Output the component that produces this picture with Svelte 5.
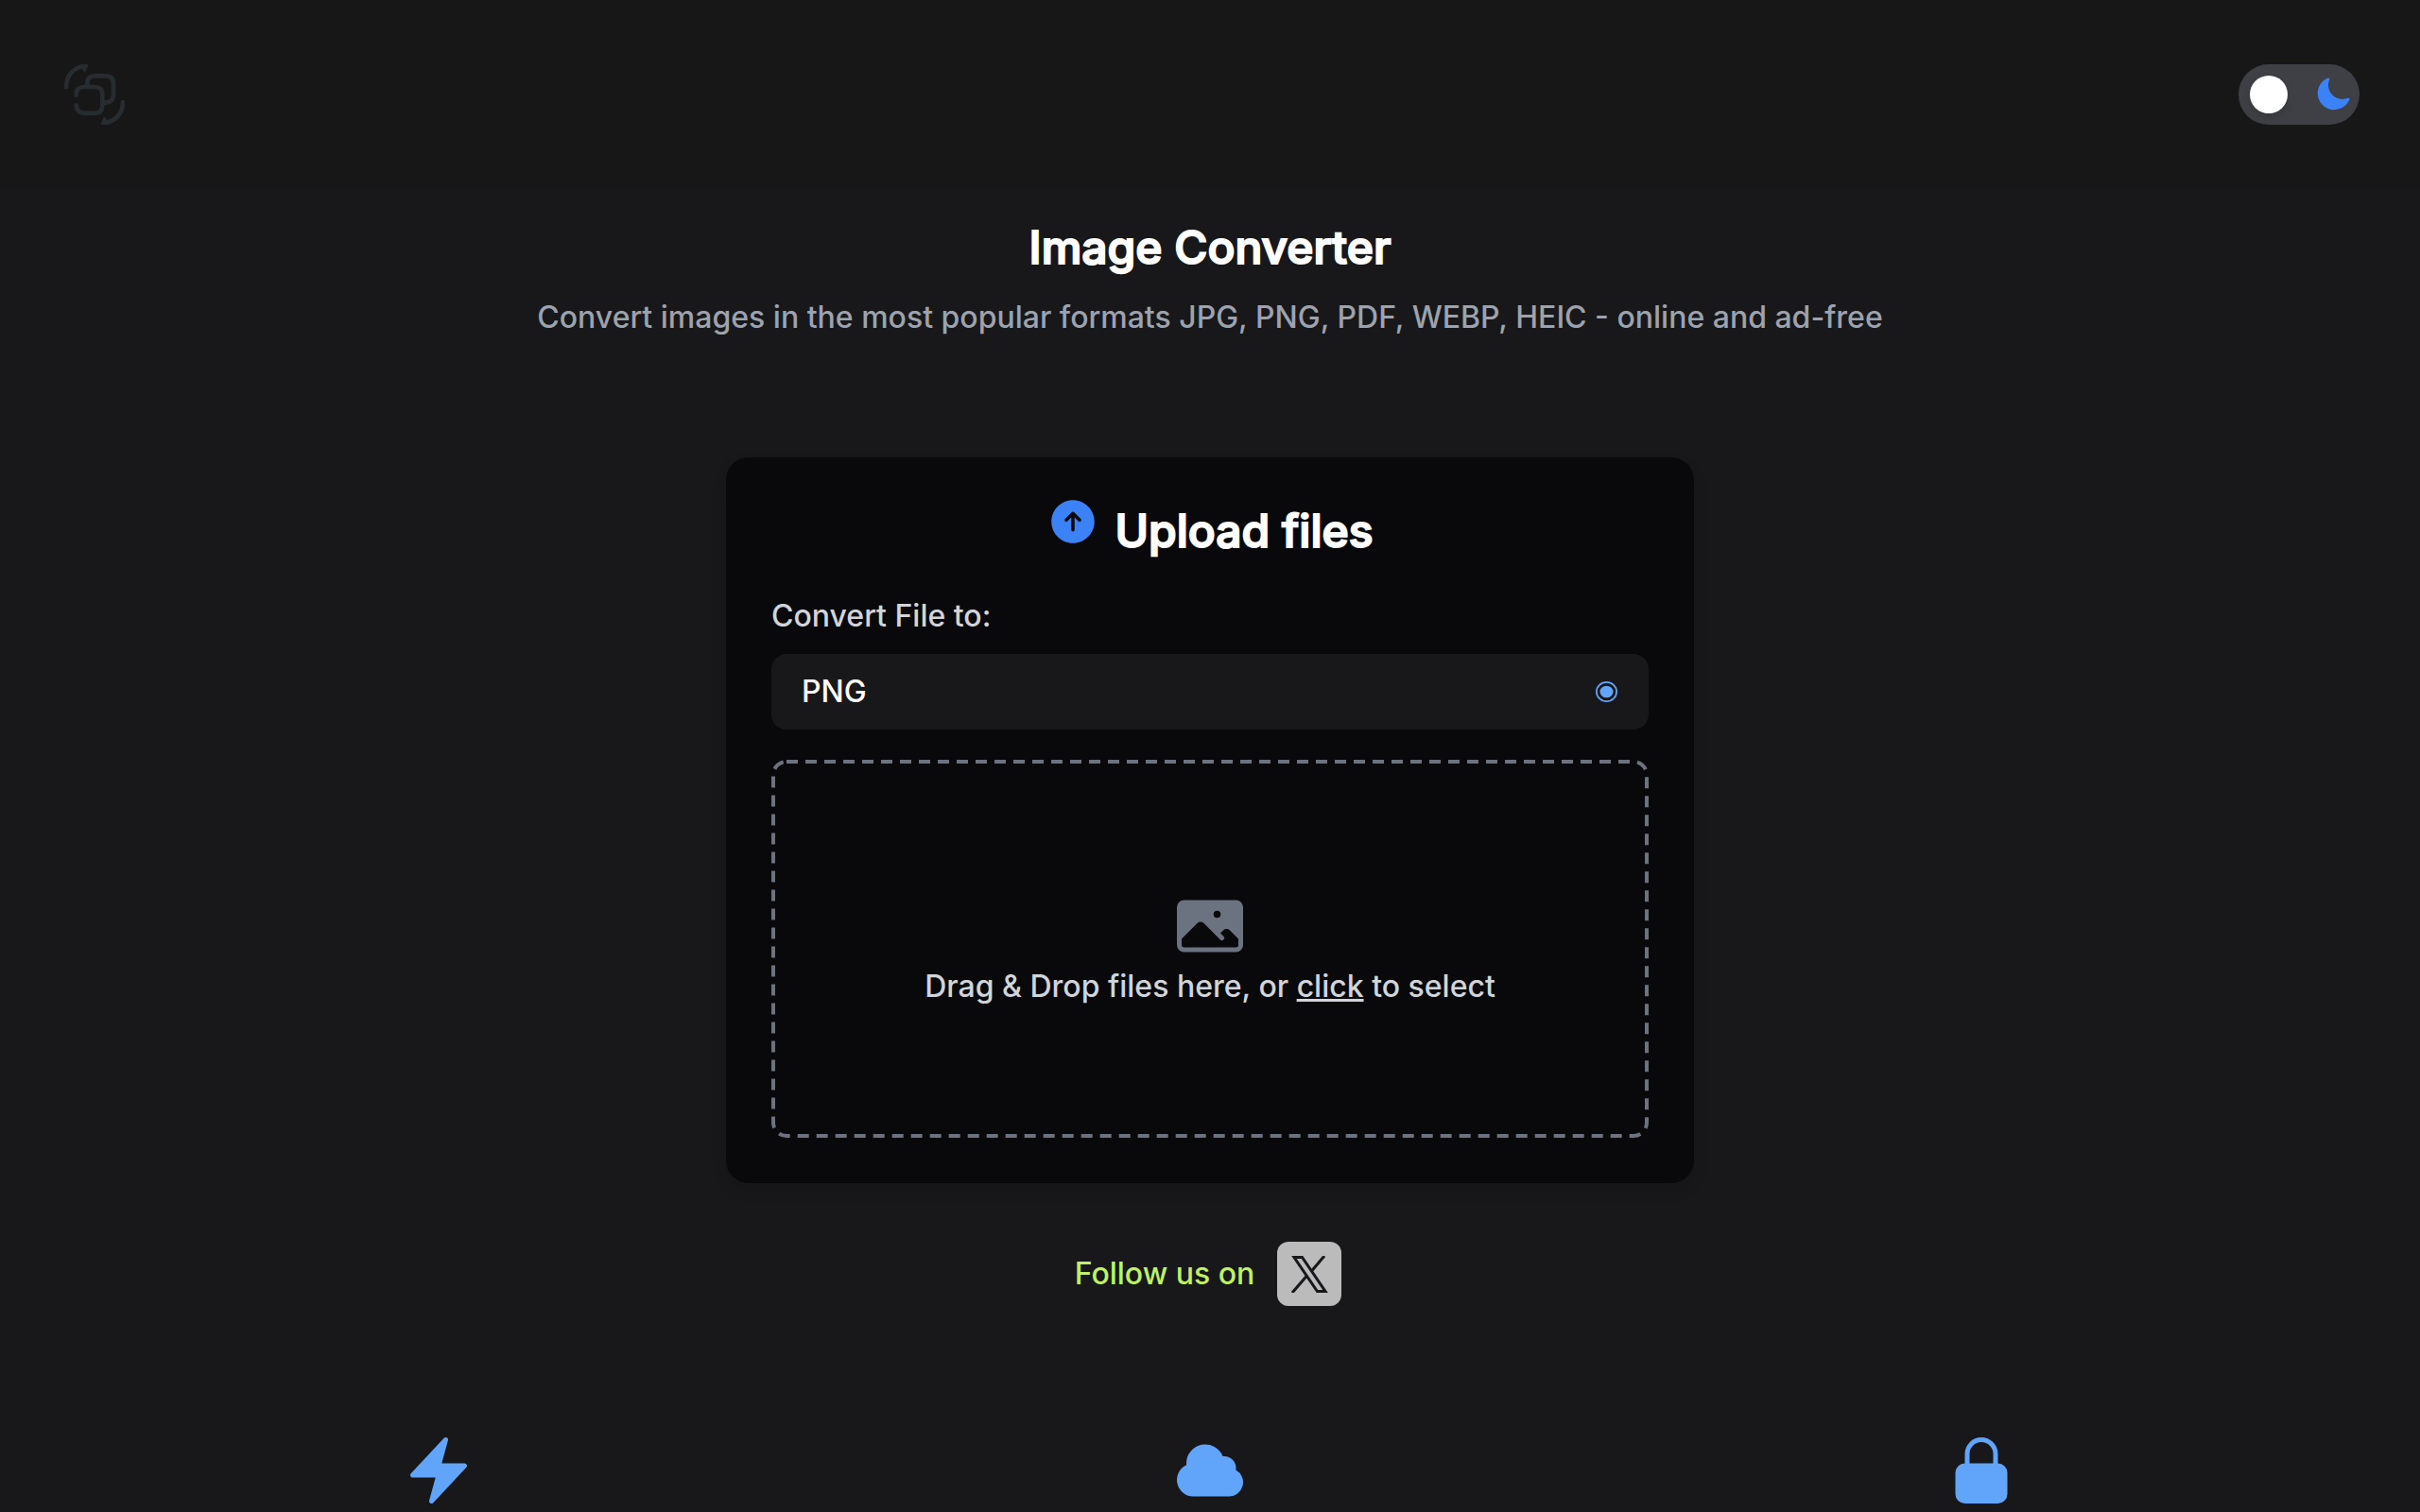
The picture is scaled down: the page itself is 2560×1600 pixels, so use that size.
<script lang="ts">
  let format: string = "PNG";
  let dark: boolean = true;
  const formats = ["PNG", "JPG", "PDF", "WEBP", "HEIC"];
</script>

<header class="header">
  <a class="logo" href="/" aria-label="Home">
    <svg viewBox="0 0 192 192" fill="none" aria-hidden="true">
      <path d="M6 72C7 34 30 9 68 6" />
      <path class="tip" d="M50 4L72 4L65 21Z" />
      <path d="M73 64V60Q73 37 97 37H132Q156 37 156 61V96Q156 120 132 122H126" />
      <path d="M38 98V96Q38 72 62 72H97Q121 72 121 96V131Q121 155 97 155H62Q40 154 38 130" />
      <path d="M186 120C185 158 162 183 124 186" />
      <path class="tip" d="M142 188L120 188L127 171Z" />
    </svg>
  </a>
  <label class="switch">
    <input type="checkbox" aria-label="Dark mode" bind:checked={dark} />
    <span class="knob"></span>
    <svg viewBox="0 0 24 24" fill="currentColor" aria-hidden="true">
      <path d="M9.528 1.718a.75.75 0 0 1 .162.819A8.97 8.97 0 0 0 9 6a9 9 0 0 0 9 9 8.97 8.97 0 0 0 3.463-.69.75.75 0 0 1 .981.98 10.503 10.503 0 0 1-9.694 6.46c-5.799 0-10.5-4.7-10.5-10.5 0-4.368 2.667-8.112 6.46-9.694a.75.75 0 0 1 .818.162Z" />
    </svg>
  </label>
</header>

<main>
  <h1>Image Converter</h1>
  <p class="subtitle">
    Convert images in the most popular formats JPG, PNG, PDF, WEBP, HEIC - online and ad-free
  </p>

  <section class="card">
    <div class="card__title">
      <svg viewBox="0 0 24 24" fill="currentColor" aria-hidden="true">
        <path fill-rule="evenodd" d="M12 2.25c-5.385 0-9.75 4.365-9.75 9.75s4.365 9.75 9.75 9.75 9.75-4.365 9.75-9.75S17.385 2.25 12 2.25Zm.53 5.47a.75.75 0 0 0-1.06 0l-3 3a.75.75 0 1 0 1.06 1.06l1.72-1.72v5.69a.75.75 0 0 0 1.5 0v-5.69l1.72 1.72a.75.75 0 1 0 1.06-1.06l-3-3Z" clip-rule="evenodd" />
      </svg>
      <h2>Upload files</h2>
    </div>

    <label class="field-label" for="format">Convert File to:</label>
    <div class="select">
      <select id="format" bind:value={format}>
        {#each formats as item}
          <option value={item}>{item}</option>
        {/each}
      </select>
      <svg viewBox="0 0 24 24" aria-hidden="true">
        <ellipse cx="11.5" cy="12" rx="10.6" ry="10.2" fill="none" stroke="currentColor" stroke-width="1.8" />
        <ellipse cx="11.5" cy="12" rx="7" ry="6.3" fill="currentColor" />
      </svg>
    </div>

    <div class="dropzone">
      <svg class="dropzone__border" aria-hidden="true">
        <rect x="2" y="2" rx="14" />
      </svg>
      <svg class="dropzone__icon" viewBox="0 0 24 24" fill="currentColor" aria-hidden="true">
        <path fill-rule="evenodd" d="M1.5 6a2.25 2.25 0 0 1 2.25-2.25h16.5A2.25 2.25 0 0 1 22.5 6v12a2.25 2.25 0 0 1-2.25 2.25H3.75A2.25 2.25 0 0 1 1.5 18V6ZM3 16.06V18c0 .414.336.75.75.75h16.5A.75.75 0 0 0 21 18v-1.94l-2.69-2.689a1.5 1.5 0 0 0-2.12 0l-.88.879.97.97a.75.75 0 1 1-1.06 1.06l-5.16-5.159a1.5 1.5 0 0 0-2.12 0L3 16.061Zm10.125-7.81a1.125 1.125 0 1 1 2.25 0 1.125 1.125 0 0 1-2.25 0Z" clip-rule="evenodd" />
      </svg>
      <p>Drag &amp; Drop files here, or <button type="button">click</button> to select</p>
    </div>
  </section>

  <div class="follow">
    <span>Follow us on</span>
    <a href="https://x.com" aria-label="X">
      <svg viewBox="0 0 39 39" aria-hidden="true">
        <path fill="none" stroke="currentColor" stroke-width="3" d="M3 1.5H11.5L36 37.5H27.5Z" />
        <path fill="none" stroke="currentColor" stroke-width="3" d="M35 0L21.5 16M1 39L16.5 21" />
      </svg>
    </a>
  </div>

  <div class="features">
    <svg viewBox="0 0 24 24" fill="currentColor" aria-hidden="true">
      <path fill-rule="evenodd" d="M14.615 1.595a.75.75 0 0 1 .359.852L12.982 9.75h7.268a.75.75 0 0 1 .548 1.262l-10.5 11.25a.75.75 0 0 1-1.272-.71l1.992-7.302H3.75a.75.75 0 0 1-.548-1.262l10.5-11.25a.75.75 0 0 1 .913-.143Z" clip-rule="evenodd" />
    </svg>
    <svg viewBox="0 0 24 24" fill="currentColor" aria-hidden="true">
      <path fill-rule="evenodd" d="M4.5 9.75a6 6 0 0 1 11.573-2.226 3.75 3.75 0 0 1 4.133 4.303A4.5 4.5 0 0 1 18 20.25H6.75a5.25 5.25 0 0 1-2.23-10.004 6.072 6.072 0 0 1-.02-.496Z" clip-rule="evenodd" />
    </svg>
    <svg viewBox="0 0 24 24" fill="currentColor" aria-hidden="true">
      <path fill-rule="evenodd" d="M12 1.5a5.25 5.25 0 0 0-5.25 5.25v3a3 3 0 0 0-3 3v6.75a3 3 0 0 0 3 3h10.5a3 3 0 0 0 3-3v-6.75a3 3 0 0 0-3-3v-3c0-2.9-2.35-5.25-5.25-5.25Zm3.75 8.25v-3a3.75 3.75 0 1 0-7.5 0v3h7.5Z" clip-rule="evenodd" />
    </svg>
  </div>
</main>

<style>
  :global(body) {
    background-color: #18181b;
    color: #fff;
    font-family: Inter, "Liberation Sans", sans-serif;
    font-size: 32px;
    font-weight: 500;
    line-height: 48px;
  }

  h1,
  h2,
  p {
    margin: 0;
  }

  svg {
    display: block;
  }

  .header {
    display: flex;
    justify-content: space-between;
    align-items: center;
    padding: 68px 64px 68px 68px;
    background-color: #171717;
  }

  .logo svg {
    width: 64px;
    height: 64px;
    stroke: #272c30;
    stroke-width: 14;
    stroke-linecap: round;
    stroke-linejoin: round;
  }

  .logo .tip {
    fill: #272c30;
    stroke-width: 6;
  }

  .switch {
    display: flex;
    justify-content: space-between;
    align-items: center;
    box-sizing: border-box;
    width: 128px;
    height: 64px;
    padding: 0 8px 0 12px;
    border-radius: 32px;
    background-color: #3f3f46;
    cursor: pointer;
  }

  .switch input {
    position: absolute;
    opacity: 0;
  }

  .switch svg {
    width: 40px;
    height: 40px;
    color: #3b82f6;
  }

  .knob {
    width: 40px;
    height: 40px;
    border-radius: 50%;
    background-color: #fff;
    box-shadow: 0 4px 8px rgba(0, 0, 0, 0.15);
  }

  main {
    display: flex;
    flex-direction: column;
    align-items: center;
    padding-top: 28px;
  }

  h1,
  h2 {
    font-size: 48px;
    font-weight: 500;
    line-height: 68px;
    -webkit-text-stroke: 2px #fff;
  }

  .subtitle {
    margin-top: 16px;
    color: #9ca3af;
    text-align: center;
  }

  .card {
    box-sizing: border-box;
    width: 100%;
    max-width: 1024px;
    margin-top: 124px;
    padding: 40px 48px 48px;
    border-radius: 24px;
    background-color: #09090b;
    box-shadow: 0 8px 16px rgba(0, 0, 0, 0.1);
  }

  .card__title {
    display: flex;
    justify-content: center;
    gap: 16px;
  }

  .card__title svg {
    width: 56px;
    height: 56px;
    color: #3b82f6;
  }

  h2 {
    padding-top: 4px;
  }

  .field-label {
    display: block;
    margin-top: 32px;
    color: #d1d5db;
  }

  .select {
    display: flex;
    align-items: center;
    margin-top: 16px;
    padding-right: 32px;
    border-radius: 16px;
    background-color: #18181b;
  }

  .select select {
    flex: 1;
    height: 80px;
    padding: 0 32px;
    border: none;
    outline: none;
    appearance: none;
    background: none;
    color: #fff;
    font: inherit;
  }

  .select svg {
    width: 24px;
    height: 24px;
    color: #60a5fa;
  }

  .dropzone {
    position: relative;
    display: flex;
    flex-direction: column;
    justify-content: center;
    align-items: center;
    height: 400px;
    margin-top: 32px;
    color: #d1d5db;
  }

  .dropzone__border {
    position: absolute;
    inset: 0;
    width: 100%;
    height: 100%;
    pointer-events: none;
  }

  .dropzone__border rect {
    width: calc(100% - 4px);
    height: calc(100% - 4px);
    fill: none;
    stroke: #6b7280;
    stroke-width: 4px;
    stroke-dasharray: 12 8;
  }

  .dropzone__icon {
    width: 80px;
    height: 80px;
    color: #6b7280;
  }

  .dropzone button {
    padding: 0;
    border: none;
    background: none;
    color: inherit;
    font: inherit;
    text-decoration: underline;
    cursor: pointer;
  }

  .follow {
    display: flex;
    align-items: center;
    gap: 24px;
    margin-top: 62px;
    padding-right: 4px;
    color: #bef264;
  }

  .follow a {
    display: flex;
    justify-content: center;
    align-items: center;
    width: 68px;
    height: 68px;
    border-radius: 12px;
    background-color: #bbb;
    color: #18181b;
  }

  .follow svg {
    width: 39px;
    height: 39px;
  }

  .features {
    display: grid;
    grid-template-columns: repeat(3, 1fr);
    justify-items: center;
    box-sizing: border-box;
    width: 100%;
    margin-top: 134px;
    padding: 0 56px;
  }

  .features svg {
    width: 80px;
    height: 80px;
    color: #60a5fa;
  }
</style>
